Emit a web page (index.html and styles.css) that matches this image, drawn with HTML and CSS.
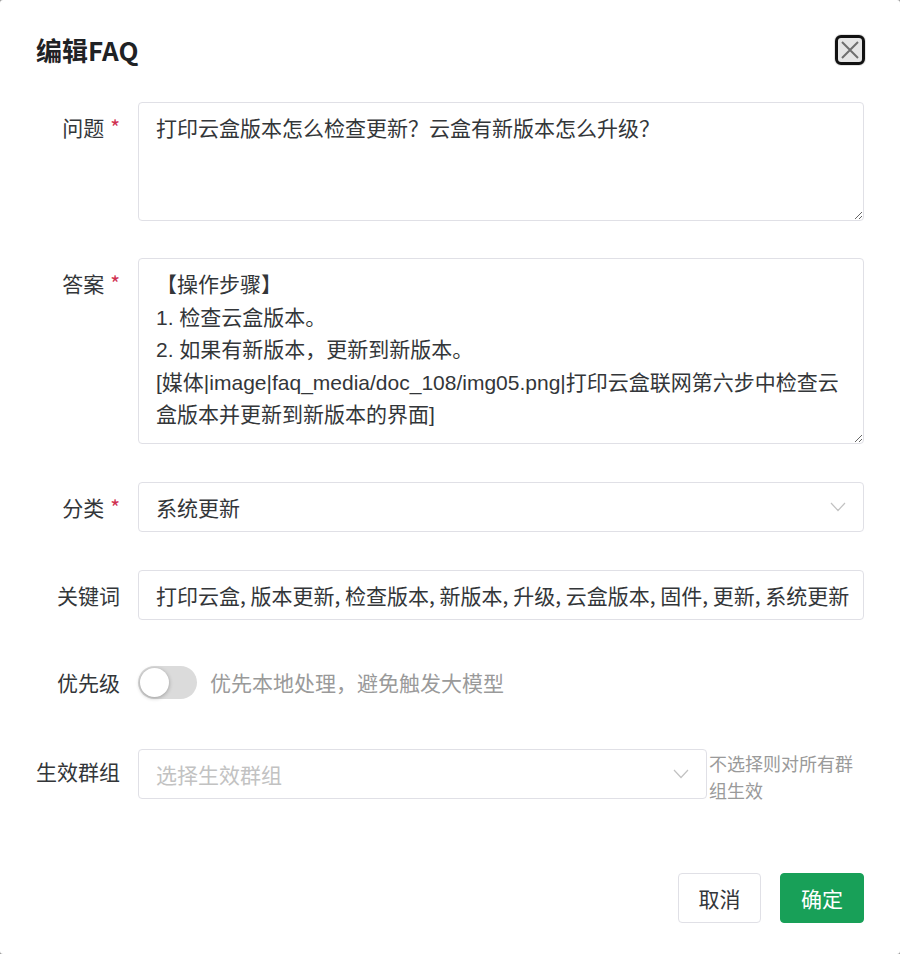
FILE: index.html
```html
<!DOCTYPE html>
<html lang="zh-CN">
<head>
<meta charset="utf-8">
<title>编辑FAQ</title>
<link rel="stylesheet" href="styles.css">
</head>
<body>
<div class="modal">
  <div class="header">
    <div class="title">编辑FAQ</div>
    <button class="close" aria-label="关闭">
      <svg width="20" height="20" viewBox="0 0 20 20"><path d="M2 2 L18 18 M18 2 L2 18" stroke="#6f6f6f" stroke-width="2" fill="none"/></svg>
    </button>
  </div>

  <form class="form">
    <div class="item item-q">
      <label class="label">问题<span class="req">*</span></label>
      <textarea class="textarea ta-q">打印云盒版本怎么检查更新？云盒有新版本怎么升级？</textarea>
    </div>

    <div class="item">
      <label class="label">答案<span class="req">*</span></label>
      <textarea class="textarea ta-a">【操作步骤】
1. 检查云盒版本。
2. 如果有新版本，更新到新版本。
[媒体|image|faq_media/doc_108/img05.png|打印云盒联网第六步中检查云盒版本并更新到新版本的界面]</textarea>
    </div>

    <div class="item">
      <label class="label">分类<span class="req">*</span></label>
      <div class="select">
        <span class="value">系统更新</span>
        <svg class="chev" width="16" height="10" viewBox="0 0 16 10"><path d="M1 1 L8 8.5 L15 1" stroke="#c2c2c2" stroke-width="1.2" fill="none"/></svg>
      </div>
    </div>

    <div class="item">
      <label class="label">关键词</label>
      <div class="input">打印云盒, 版本更新, 检查版本, 新版本, 升级, 云盒版本, 固件, 更新, 系统更新</div>
    </div>

    <div class="item item-switch">
      <label class="label">优先级</label>
      <div class="switch-row">
        <span class="switch"><span class="knob"></span></span>
        <span class="switch-text">优先本地处理，避免触发大模型</span>
      </div>
    </div>

    <div class="item item-group">
      <label class="label label-group">生效群组</label>
      <div class="group-row">
        <div class="select select-group">
          <span class="placeholder">选择生效群组</span>
          <svg class="chev" width="16" height="10" viewBox="0 0 16 10"><path d="M1 1 L8 8.5 L15 1" stroke="#c2c2c2" stroke-width="1.2" fill="none"/></svg>
        </div>
        <div class="hint">不选择则对所有群组生效</div>
      </div>
    </div>
  </form>

  <div class="footer">
    <button class="btn btn-cancel">取消</button>
    <button class="btn btn-ok">确定</button>
  </div>
</div>
</body>
</html>
```

FILE: styles.css
```css
html {
  background: #9a9a9a;
}
body {
  margin: 0;
  font-family: "Noto Sans CJK SC", "Noto Sans", sans-serif;
  color: #333639;
}
.modal {
  background: #fff;
  border-radius: 3px;
  height: 954px;
  box-sizing: border-box;
  padding: 34px 36px 0;
}
.header {
  display: flex;
  justify-content: space-between;
  align-items: center;
  height: 32px;
  margin-bottom: 36px;
}
.title {
  font-size: 26px;
  font-weight: 600;
  line-height: 32px;
  color: #1f2225;
}
.close {
  width: 30px;
  height: 30px;
  margin-right: -1px;
  padding: 0;
  border: 3px solid #111;
  border-radius: 6px;
  background: #e6e6e6;
  box-shadow: 0 0 0 1px #e4e4e4;
  display: flex;
  align-items: center;
  justify-content: center;
}
.close svg {
  display: block;
}
.form {
  margin: 0;
}
.item {
  display: grid;
  grid-template-columns: 102px 1fr;
  margin-bottom: 38px;
}
.item-q {
  margin-bottom: 37px;
}
.label {
  font-size: 21px;
  line-height: 50px;
  height: 50px;
  text-align: right;
  padding-right: 18px;
  white-space: nowrap;
  color: #333639;
}
.label-group {
  line-height: 44px;
}
.req {
  color: #d03050;
  margin-left: 6px;
}
.textarea {
  display: block;
  width: 100%;
  box-sizing: border-box;
  border: 1px solid #e0e0e6;
  border-radius: 4px;
  padding: 10px 17px 12px;
  margin: 0;
  font-family: "Liberation Sans", "Noto Sans CJK SC", sans-serif;
  font-size: 21px;
  line-height: 32.5px;
  color: #333639;
  resize: vertical;
  outline: none;
}
.ta-q {
  height: 119px;
}
.ta-a {
  height: 186px;
  overflow: hidden;
}
.select,
.input {
  height: 50px;
  box-sizing: border-box;
  border: 1px solid #e0e0e6;
  border-radius: 4px;
  padding: 0 17px 0 17px;
  font-size: 21px;
  display: flex;
  align-items: center;
  white-space: nowrap;
  overflow: hidden;
}
.select {
  justify-content: space-between;
}
.chev {
  display: block;
  flex: none;
}
.placeholder {
  color: #c2c2c2;
}
.item-switch {
  margin-bottom: 43px;
}
.item-switch .label {
  height: 48px;
  line-height: 48px;
}
.switch-row {
  display: flex;
  align-items: center;
  height: 48px;
  gap: 13px;
}
.switch {
  position: relative;
  width: 59px;
  height: 33px;
  border-radius: 17px;
  background: #dbdbdb;
  flex: none;
}
.knob {
  position: absolute;
  left: 2px;
  top: 2px;
  width: 29px;
  height: 29px;
  border-radius: 50%;
  background: #fff;
  box-shadow: 0 1px 4px rgba(0, 0, 0, 0.3);
}
.switch-text {
  font-size: 21px;
  color: #9a9a9a;
}
.item-group {
  margin-bottom: 0;
}
.group-row {
  display: flex;
  align-items: flex-start;
}
.select-group {
  flex: 0 0 569px;
}
.hint {
  margin-left: 2px;
  width: 152px;
  font-size: 18px;
  line-height: 27px;
  color: #9a9a9a;
  padding-top: 1px;
}
.footer {
  display: flex;
  justify-content: flex-end;
  gap: 19px;
  margin-top: 69px;
}
.btn {
  height: 50px;
  padding: 0;
  border-radius: 4px;
  font-family: "Noto Sans CJK SC", "Noto Sans", sans-serif;
  font-size: 21px;
  white-space: nowrap;
  cursor: pointer;
}
.btn-cancel {
  width: 83px;
  background: #fff;
  color: #333639;
  border: 1px solid #e0e0e6;
}
.btn-ok {
  width: 84px;
  background: #18a058;
  color: #fff;
  border: 1px solid #18a058;
}
```
